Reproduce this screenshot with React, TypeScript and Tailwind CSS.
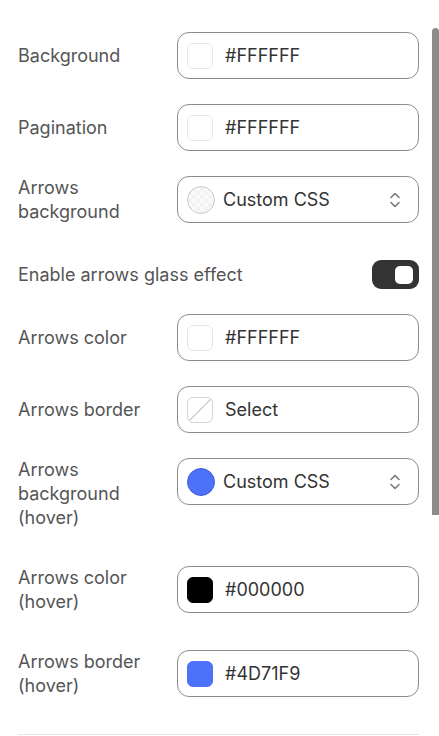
import React from "react";

type Swatch = "white" | "black" | "blue" | "none" | "circle-clear" | "circle-blue";

type Row =
  | { kind: "field"; label: string[]; value: string; swatch: Swatch; select?: boolean }
  | { kind: "toggle"; label: string; on: boolean };

const rows: Row[] = [
  { kind: "field", label: ["Background"], value: "#FFFFFF", swatch: "white" },
  { kind: "field", label: ["Pagination"], value: "#FFFFFF", swatch: "white" },
  { kind: "field", label: ["Arrows", "background"], value: "Custom CSS", swatch: "circle-clear", select: true },
  { kind: "toggle", label: "Enable arrows glass effect", on: true },
  { kind: "field", label: ["Arrows color"], value: "#FFFFFF", swatch: "white" },
  { kind: "field", label: ["Arrows border"], value: "Select", swatch: "none" },
  { kind: "field", label: ["Arrows", "background", "(hover)"], value: "Custom CSS", swatch: "circle-blue", select: true },
  { kind: "field", label: ["Arrows color", "(hover)"], value: "#000000", swatch: "black" },
  { kind: "field", label: ["Arrows border", "(hover)"], value: "#4D71F9", swatch: "blue" },
];

function SwatchBox({ type }: { type: Swatch }) {
  if (type === "circle-clear") {
    return (
      <span
        className="h-[28px] w-[28px] shrink-0 rounded-full border border-[#c9c9c9]"
        style={{
          backgroundColor: "#fafafa",
          backgroundImage:
            "linear-gradient(45deg,#f2f2f2 25%,transparent 25%,transparent 75%,#f2f2f2 75%),linear-gradient(45deg,#f2f2f2 25%,transparent 25%,transparent 75%,#f2f2f2 75%)",
          backgroundSize: "8px 8px",
          backgroundPosition: "0 0,4px 4px",
        }}
      />
    );
  }
  if (type === "circle-blue") {
    return <span className="h-[28px] w-[28px] shrink-0 rounded-full border border-[#3f5fd6] bg-[#4D71F9]" />;
  }
  if (type === "none") {
    return (
      <span className="relative h-[26px] w-[26px] shrink-0 overflow-hidden rounded-[6px] border border-[#d4d4d4] bg-white">
        <svg viewBox="0 0 26 26" className="absolute inset-0 h-full w-full">
          <line x1="1" y1="25" x2="25" y2="1" stroke="#c4c4c4" strokeWidth="1.3" />
        </svg>
      </span>
    );
  }
  const color =
    type === "black" ? "bg-black border-black" : type === "blue" ? "bg-[#4D71F9] border-[#4D71F9]" : "bg-white border-[#e6e6e6]";
  return <span className={`h-[26px] w-[26px] shrink-0 rounded-[6px] border ${color}`} />;
}

function Chevrons() {
  return (
    <svg width="14" height="20" viewBox="0 0 14 20" fill="none" stroke="#7a7a7a" strokeWidth="1.6" strokeLinecap="round" strokeLinejoin="round">
      <path d="M3 7.5 L7 3.5 L11 7.5" />
      <path d="M3 12.5 L7 16.5 L11 12.5" />
    </svg>
  );
}

export default function App() {
  return (
    <div
      className="relative h-[736px] w-[439px] overflow-hidden bg-white"
      style={{ fontFamily: "Inter, 'Noto Sans', sans-serif" }}
    >
      <div className="flex flex-col gap-[25px] pl-[18px] pr-[20px] pt-[32px]">
        {rows.map((row, i) =>
          row.kind === "toggle" ? (
            <div key={i} className="flex h-[29px] items-center justify-between">
              <span className="text-[18px] leading-[24px] text-[#555]">{row.label}</span>
              <span className="flex h-[29px] w-[47px] items-center justify-end rounded-[9px] bg-[#333] px-[6px]">
                <span className="h-[18px] w-[18px] rounded-[5px] bg-white" />
              </span>
            </div>
          ) : (
            <div key={i} className={`flex items-start ${row.label.length > 1 ? "pb-[11px]" : ""}`}>
              <div
                className={`w-[159px] shrink-0 text-[18px] leading-[24px] text-[#555] ${
                  row.label.length === 1 ? "flex h-[47px] items-center" : ""
                }`}
              >
                {row.label.length === 1 ? row.label[0] : row.label.map((l) => <div key={l}>{l}</div>)}
              </div>
              <div className="flex h-[47px] flex-1 items-center rounded-[12px] border border-[#8c8c8c] pl-[9px] pr-[16px]">
                <SwatchBox type={row.swatch} />
                <span className={`${row.select ? "ml-[8px]" : "ml-[12px]"} flex-1 text-[18px] text-[#333]`}>{row.value}</span>
                {row.select ? <Chevrons /> : null}
              </div>
            </div>
          )
        )}
        <div className="h-px bg-[#e5e5e5]" />
      </div>
      <div className="absolute right-0 top-[28px] h-[487px] w-[7px] rounded-t-[4px] bg-[#8c8c8c]" />
    </div>
  );
}
